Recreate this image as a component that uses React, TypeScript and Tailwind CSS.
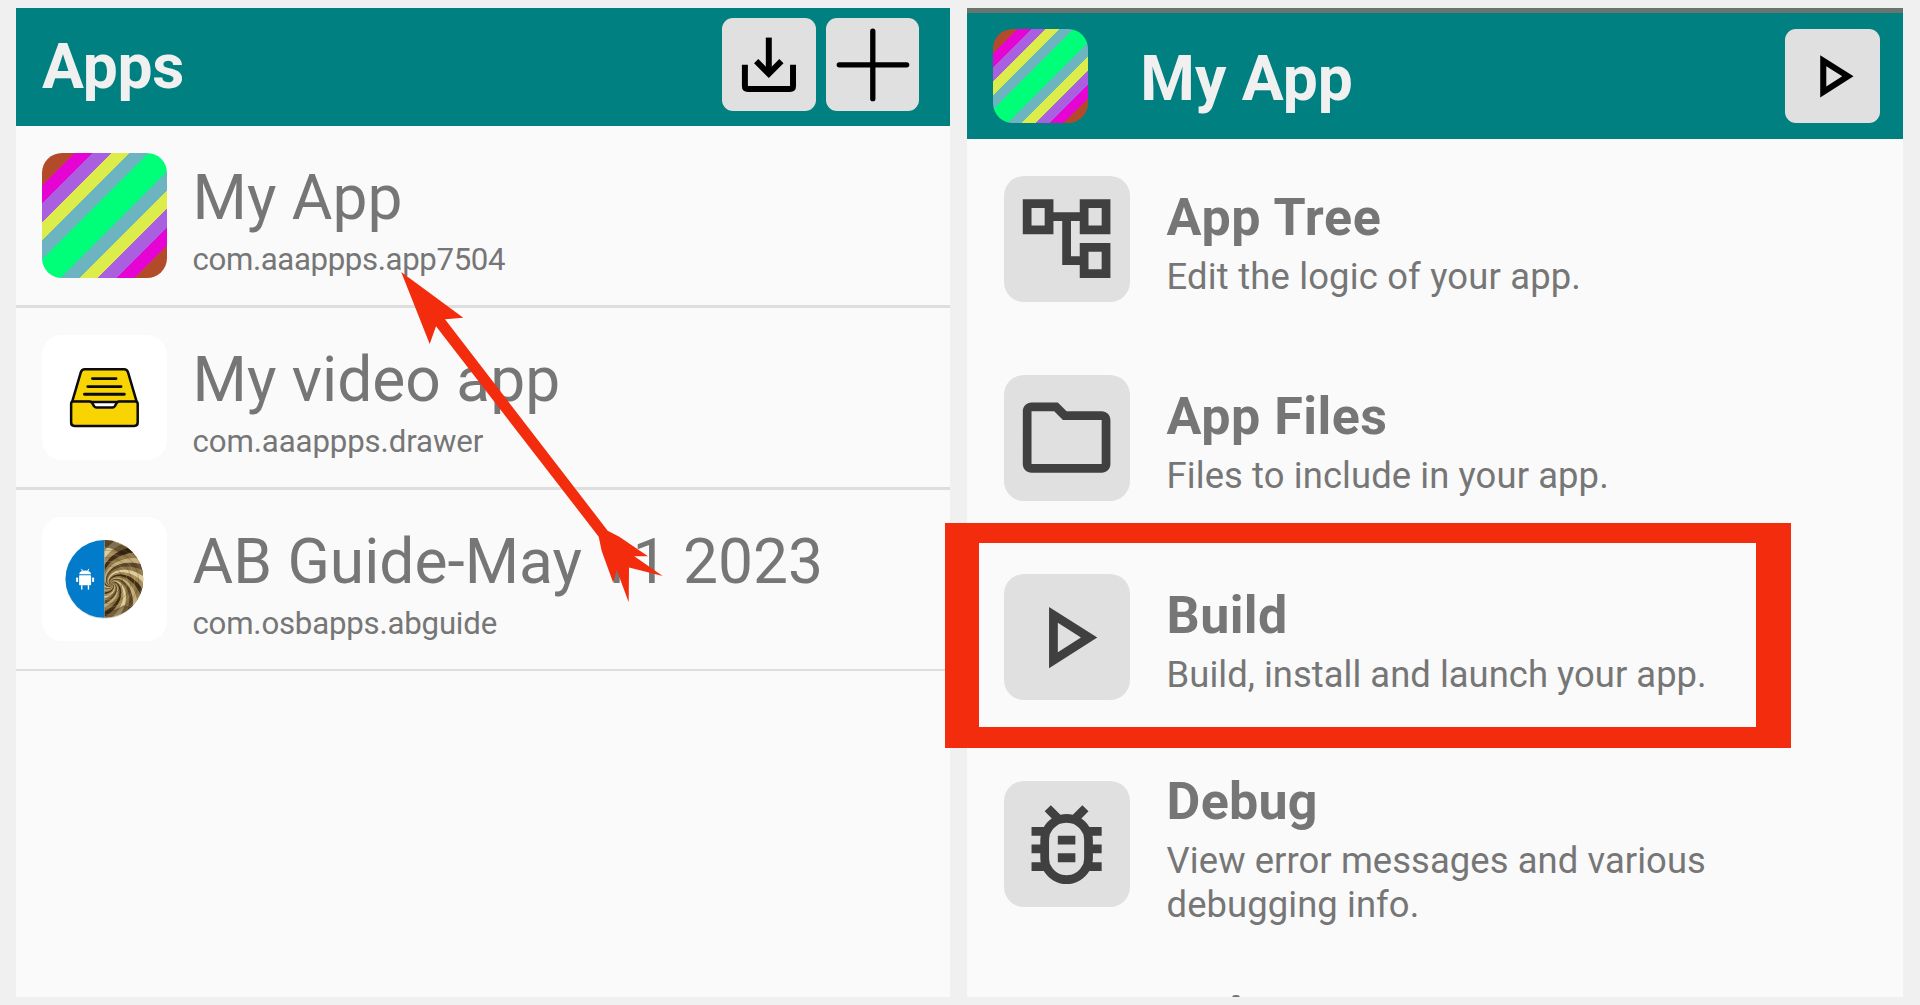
import type { ReactNode } from "react";

const STRIPES =
  "bg-[linear-gradient(135deg,#b34b2b_12.8%,#e604d4_12.9%,#e604d4_20.2%,#aa5fe0_20.3%,#aa5fe0_27.6%,#dcec4a_27.7%,#dcec4a_35%,#6cb4c0_35.1%,#6cb4c0_42.4%,#00ff78_42.5%,#00ff78_57.4%,#6cb4c0_57.5%,#6cb4c0_64.8%,#dcec4a_64.9%,#dcec4a_72.2%,#aa5fe0_72.3%,#aa5fe0_79.6%,#e604d4_79.7%,#e604d4_87%,#b34b2b_87.1%)]";

const TREE =
  "M22 11V3h-7v3H9V3H2v8h7V8h2v10h4v3h7v-8h-7v3h-2V8h2v3h7zM7 9H4V5h3v4zm10 6h3v4h-3v-4zm0-10h3v4h-3V5z";
const FOLDER =
  "M9.17 6l2 2H20v10H4V6h5.17M10 4H4c-1.1 0-1.99.9-1.99 2L2 18c0 1.1.9 2 2 2h16c1.1 0 2-.9 2-2V8c0-1.1-.9-2-2-2h-8l-2-2z";
const PLAY = "M10 8.64L15.27 12 10 15.36V8.64M8 5v14l11-7L8 5z";
const BUG =
  "M20 8h-2.81c-.45-.78-1.07-1.45-1.82-1.96L17 4.41 15.59 3l-2.17 2.17C12.96 5.06 12.49 5 12 5s-.96.06-1.41.17L8.41 3 7 4.41l1.62 1.63C7.88 6.55 7.26 7.22 6.81 8H4v2h2.09c-.05.33-.09.66-.09 1v1H4v2h2v1c0 .34.04.67.09 1H4v2h2.81c1.04 1.79 2.97 3 5.19 3s4.15-1.21 5.19-3H20v-2h-2.09c.05-.33.09-.66.09-1v-1h2v-2h-2v-1c0-.34-.04-.67-.09-1H20V8zm-4 4v3c0 .22-.03.47-.07.7l-.1.65-.37.65c-.72 1.24-2.04 2-3.46 2s-2.74-.77-3.46-2l-.37-.64-.1-.65C8.03 15.48 8 15.23 8 15v-4c0-.23.03-.48.07-.7l.1-.65.37-.65c.3-.52.72-.97 1.21-1.31l.57-.39.74-.18c.31-.08.63-.12.94-.12s.63.04.95.12l.68.16.61.42c.5.34.91.78 1.21 1.31l.38.65.1.65c.04.22.07.47.07.69v1zm-6 2h4v2h-4zm0-4h4v2h-4z";

function Glyph({ d, className }: { d: string; className: string }) {
  return (
    <svg viewBox="0 0 24 24" className={className} fill="currentColor" fillRule="evenodd">
      <path d={d} />
    </svg>
  );
}

function DownloadIcon() {
  return (
    <svg viewBox="124 51 282 282" className="size-full" fill="none" stroke="#000" strokeWidth="18">
      <path d="M265 110V218" />
      <path d="M227 181L265 219L303 181" />
      <path d="M193 192V256Q193 265 202 265H329Q338 265 338 256V192" />
    </svg>
  );
}

function PlusIcon() {
  return (
    <svg viewBox="435 51 282 282" className="size-full" stroke="#000" strokeWidth="16" strokeLinecap="round">
      <path d="M576 91V294M475 192H678" />
    </svg>
  );
}

function DrawerIcon() {
  return (
    <svg viewBox="18 15 373 374" className="size-full" fill="#f8d502" stroke="#0b0b0b" strokeWidth="7.5" strokeLinejoin="round" strokeLinecap="round">
      <path d="M108 216L134 127Q137 118 146 118H264Q273 118 276 127L302 216Z" />
      <path d="M169 146H240M155 170H255M145 193H265" strokeWidth="8.5" />
      <path d="M111 215H160Q167 215 170 222Q174 233 182 233H229Q236 233 240 222Q243 215 250 215H298Q305 215 305 222V278Q305 288 295 288H115Q105 288 105 278V222Q105 215 111 215Z" />
    </svg>
  );
}

const CX = 226;
const CY = 763;
const BLADES = 28;
const TONES = ["#5c4729", "#8d7444", "#dccd9c", "#a58a55", "#3f2d19", "#8d7444", "#c2ad78"];

function spiral(phase: number): string {
  const pts: string[] = [];
  for (let i = 0; i <= 26; i++) {
    const r = 3 + i * 6;
    const a = phase + 1.15 * Math.log(r / 3);
    pts.push(`${(CX + r * Math.cos(a)).toFixed(1)} ${(CY + r * Math.sin(a)).toFixed(1)}`);
  }
  return pts.join("L");
}

function blade(index: number): string {
  const start = (index / BLADES) * Math.PI * 2;
  const end = ((index + 1.15) / BLADES) * Math.PI * 2;
  return `M${spiral(start)}L${spiral(end).split("L").reverse().join("L")}Z`;
}

function GuideIcon() {
  const blades = Array.from({ length: BLADES }, (_, i) => i);
  const rings = [45, 58, 69, 80, 91, 102];
  return (
    <svg viewBox="18 561 373 374" className="size-full">
      <defs>
        <clipPath id="disc-right">
          <path d="M205 630A117 117 0 0 1 205 864Z" />
        </clipPath>
        <filter id="soften">
          <feGaussianBlur stdDeviation="2" />
        </filter>
      </defs>
      <circle cx="205" cy="750" r="117" fill="#000" opacity="0.14" />
      <path d="M205 630A117 117 0 0 0 205 864Z" fill="#037bcb" />
      <g clipPath="url(#disc-right)">
        <rect x="205" y="628" width="120" height="238" fill="#7d663b" />
        <g filter="url(#soften)">
          {blades.map((i) => (
            <path key={i} d={blade(i)} fill={TONES[i % 7]} />
          ))}
        </g>
        {rings.map((r) => (
          <circle key={r} cx={212 + r * 0.05} cy={752} r={r} fill="none" stroke={r % 2 ? "#2e2010" : "#e8d9a8"} strokeWidth="2" opacity="0.35" />
        ))}
        <path d="M205 630Q250 632 285 664L262 676Q235 655 205 652Z" fill="#1f1409" opacity="0.5" />
        <path d="M205 864Q250 862 285 832L262 826Q235 845 205 846Z" fill="#2a1b0c" opacity="0.4" />
      </g>
      <g fill="#fff">
        <path d="M129 733Q131 722 147 722T165 733Z" />
        <path d="M136 717L140 725M158 717L154 725" stroke="#fff" strokeWidth="3" />
        <rect x="129" y="736" width="36" height="30" rx="2" />
        <rect x="120" y="743" width="6" height="13" rx="2" />
        <rect x="168" y="743" width="6" height="13" rx="2" />
        <rect x="135" y="766" width="4" height="13" />
        <rect x="155" y="766" width="4" height="13" />
      </g>
    </svg>
  );
}

function AppRow({ icon, name, id, idClass }: { icon: ReactNode; name: string; id: string; idClass: string }) {
  return (
    <li className="flex h-[181.7px] shrink-0 flex-col">
      <div className="flex grow items-start pt-[27px] pl-[26px]">
        <div className="size-[124.5px] shrink-0 overflow-hidden rounded-[20px] bg-white">{icon}</div>
        <div className="pt-2 pl-[26px] whitespace-nowrap text-[#767676]">
          <div className="text-[62.3px] leading-[73px]">{name}</div>
          <div className={`mt-[7px] text-[31.2px] leading-[37px] ${idClass}`}>{id}</div>
        </div>
      </div>
      <div className="h-[2.6px] shrink-0 bg-[#dedede]" />
    </li>
  );
}

interface MenuRowProps {
  d: string;
  title: string;
  text: ReactNode;
  className: string;
  titleClass: string;
  textClass: string;
}

function MenuRow({ d, title, text, className, titleClass, textClass }: MenuRowProps) {
  return (
    <li className={`flex shrink-0 items-start ${className}`}>
      <div className="flex size-[125.6px] shrink-0 items-center justify-center rounded-[20px] bg-[#e0e0e0] text-[#404040]">
        <Glyph d={d} className="size-[105.2px]" />
      </div>
      <div className="pl-[37px] whitespace-nowrap text-[#767676]">
        <div className={`text-[52px] leading-[61px] font-bold ${titleClass}`}>{title}</div>
        <div className={`mt-[7px] text-[36.4px] leading-[43.3px] ${textClass}`}>{text}</div>
      </div>
    </li>
  );
}

export default function App() {
  return (
    <main className="relative flex h-[1005px] w-[1920px] gap-[17px] overflow-hidden bg-[#f0f0f0] pt-2 pl-4 font-[Roboto,sans-serif]">
      <section className="flex h-[989px] w-[934px] flex-col overflow-hidden bg-[#fafafa]">
        <header className="flex h-[118.4px] shrink-0 items-start bg-[#008080] pl-[26px]">
          <h1 className="grow pt-[22px] text-[62.4px] leading-[73px] font-bold tracking-[-0.3px] text-[#f0f0f0]">Apps</h1>
          <div className="flex gap-[10px] pt-[9.5px] pr-[30.7px]">
            <button className="size-[93.6px] rounded-[11px] bg-[#e0e0e0]">
              <DownloadIcon />
            </button>
            <button className="size-[93.6px] rounded-[11px] bg-[#e0e0e0]">
              <PlusIcon />
            </button>
          </div>
        </header>
        <ul className="flex flex-col">
          <AppRow
            icon={<div className={`size-full ${STRIPES}`} />}
            name="My App"
            id="com.aaappps.app7504"
            idClass="tracking-[-0.36px]"
          />
          <AppRow icon={<DrawerIcon />} name="My video app" id="com.aaappps.drawer" idClass="tracking-[-0.1px]" />
          <AppRow icon={<GuideIcon />} name="AB Guide-May 11 2023" id="com.osbapps.abguide" idClass="tracking-[-0.2px]" />
        </ul>
      </section>

      <section className="flex h-[989px] w-[936px] flex-col overflow-hidden bg-[#fafafa]">
        <div className="h-[5.4px] shrink-0 bg-[#6b756f]" />
        <header className="flex h-[125.8px] shrink-0 items-start bg-[#008080] pt-[15.6px] pr-[23.5px] pl-[26.3px]">
          <div className={`size-[94.5px] shrink-0 rounded-[20px] ${STRIPES}`} />
          <h1 className="grow pt-[13px] pl-[52.5px] text-[62.4px] leading-[73px] font-bold text-[#f0f0f0]">My App</h1>
          <button className="flex size-[94.5px] items-center justify-center rounded-[11px] bg-[#e0e0e0]">
            <Glyph d={PLAY} className="size-[72.7px]" />
          </button>
        </header>
        <ul className="flex flex-col pt-[36.8px] pl-[37px]">
          <MenuRow
            className="h-[199.2px]"
            titleClass="pt-[11px] tracking-[0.7px]"
            textClass="tracking-[0.18px]"
            d={TREE}
            title="App Tree"
            text="Edit the logic of your app."
          />
          <MenuRow
            className="h-[199.2px]"
            titleClass="pt-[11px] tracking-[0.5px]"
            textClass="tracking-[0.1px]"
            d={FOLDER}
            title="App Files"
            text="Files to include in your app."
          />
          <MenuRow
            className="h-[207px]"
            titleClass="pt-[11px] tracking-[0.4px]"
            textClass="tracking-[0.03px]"
            d={PLAY}
            title="Build"
            text="Build, install and launch your app."
          />
          <MenuRow
            className="h-[214px]"
            titleClass="-mt-[10px] tracking-[0.25px]"
            textClass="tracking-[0.08px]"
            d={BUG}
            title="Debug"
            text={
              <>
                View error messages and various
                <br />
                debugging info.
              </>
            }
          />
          <li className="ml-[228px] h-[6px] w-[8px] rounded-full bg-[#747474]" />
        </ul>
      </section>

      <div className="absolute top-[523px] left-[945px] h-[224.5px] w-[845.7px] border-t-[20px] border-r-[35px] border-b-[21px] border-l-[34px] border-[#f22c0d]" />
      <svg viewBox="0 0 1920 1005" className="pointer-events-none absolute inset-0 h-[1005px] w-[1920px]">
        <path
          fill="#f22c0d"
          d="M401.2 272L463.3 317.7L445 319.3L607.7 530.7L619.3 536.7L648 556.3H634.3L662.7 576L629 567.5L628.7 602.3L616.7 570L613.3 583L601.7 551L598.7 536.7L436 326.3L429.7 344Z"
        />
      </svg>
    </main>
  );
}
